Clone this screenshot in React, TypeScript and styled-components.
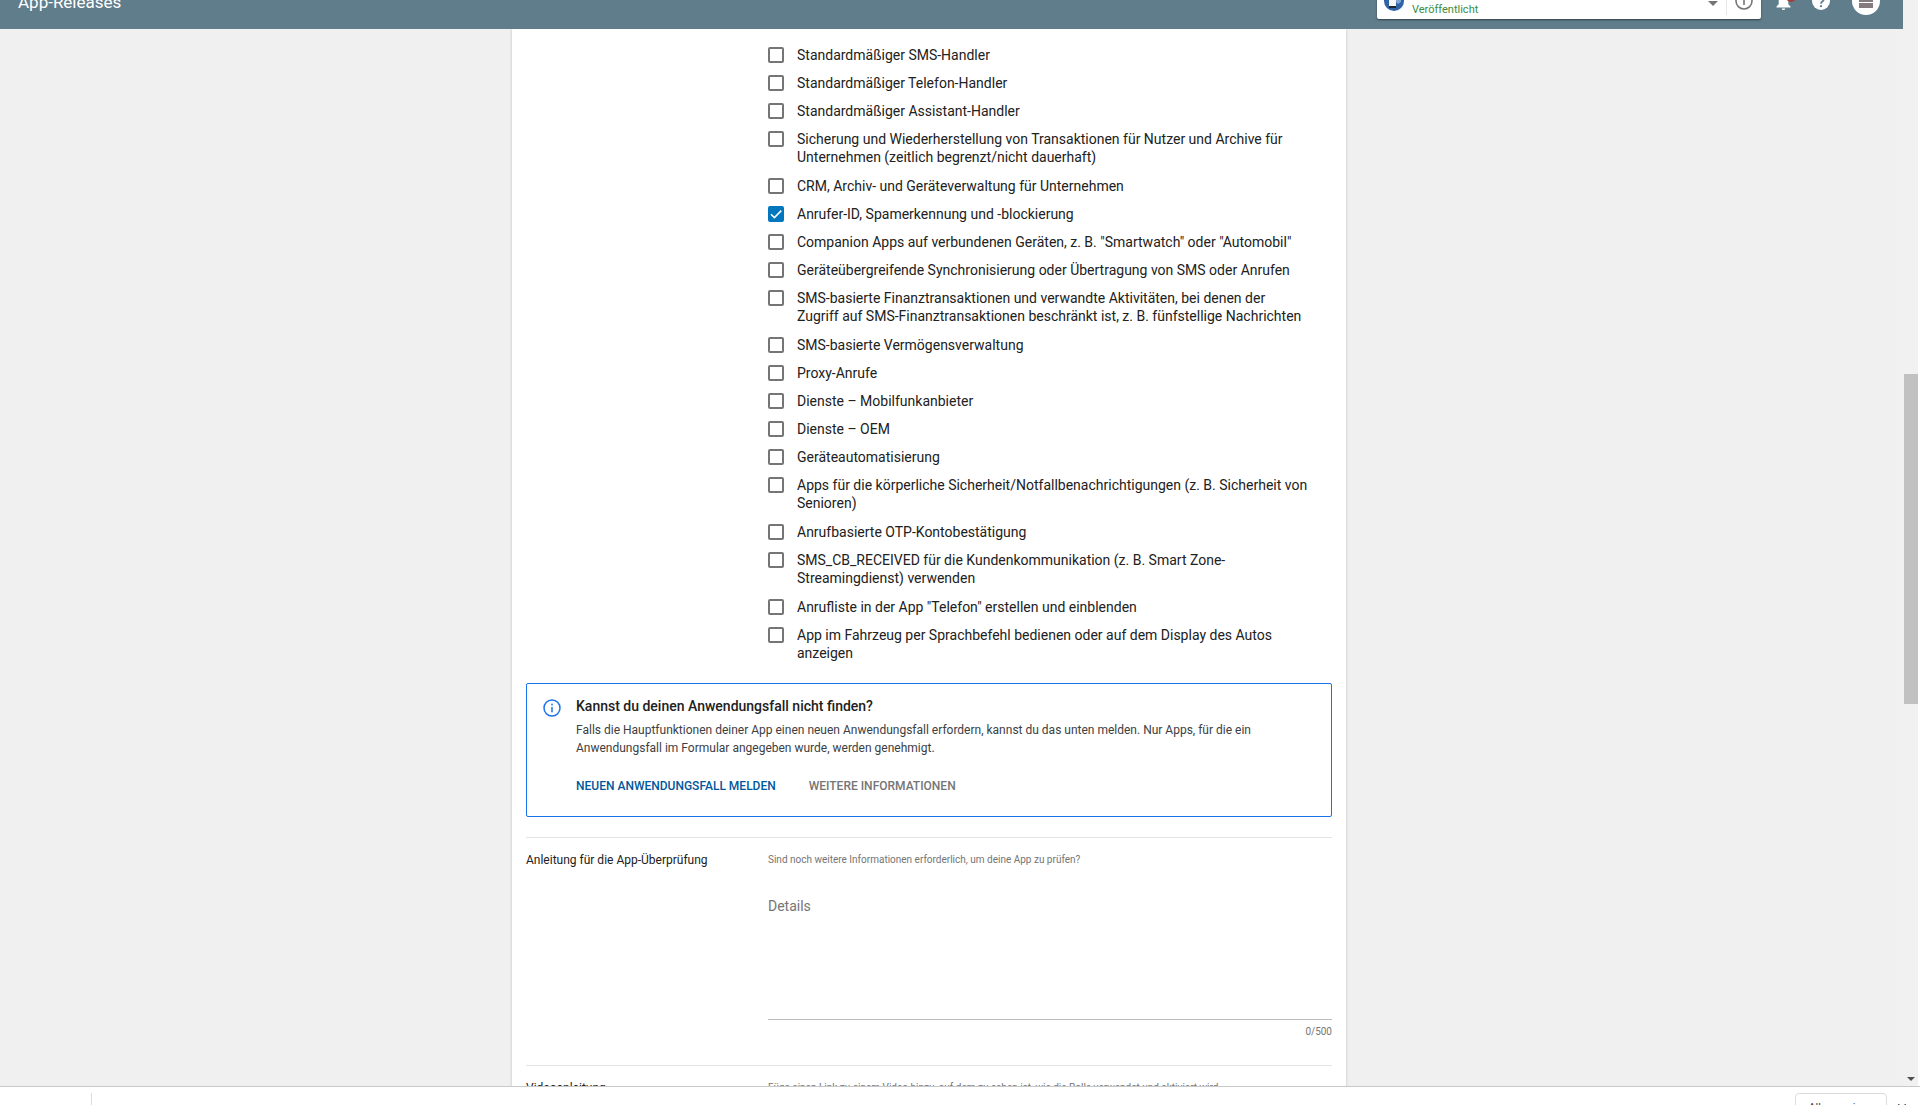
import React, { useState } from "react";
import styled, { createGlobalStyle } from "styled-components";

const GlobalStyle = createGlobalStyle`
  * { box-sizing: border-box; }
  html, body, #root { height: 100%; margin: 0; }
  body {
    overflow: hidden;
    font-family: Roboto, "Liberation Sans", sans-serif;
    font-size: 12px;
    line-height: 18px;
    color: #212121;
    background: #fff;
  }
  button, input, textarea { font: inherit; }
  button { cursor: pointer; }
`;

const Screen = styled.div`
  height: 100%;
  display: flex;
  flex-direction: column;
  overflow: hidden;
`;

const Viewport = styled.div`
  flex: 1;
  min-height: 0;
  display: flex;
  background: #f0f0f0;
`;

const Page = styled.div`
  flex: 1;
  min-width: 0;
  display: flex;
  flex-direction: column;
  overflow: hidden;
`;

/* The header is partly scrolled out of the viewport. */
const Header = styled.header`
  flex: none;
  height: 56px;
  margin-top: -27px;
  display: flex;
  align-items: center;
  padding: 0 23px 0 18px;
  background: #607d8b;
`;

const Title = styled.h1`
  flex: 1;
  margin: 0;
  padding-top: 2px;
  font-size: 17px;
  line-height: 22px;
  font-weight: 400;
  color: #fff;
`;

const AppPicker = styled.div`
  flex: none;
  width: 384px;
  height: 36px;
  display: flex;
  align-items: center;
  background: #fff;
  border-radius: 2px;
  box-shadow: 0 1px 2px rgba(0, 0, 0, 0.5);
`;

const PickerButton = styled.button`
  flex: 1;
  display: flex;
  align-items: center;
  gap: 8px;
  padding: 0 8px 0 7px;
  border: 0;
  background: none;
  text-align: left;
`;

const PickerStatus = styled.span`
  flex: 1;
  padding-top: 18px;
  font-size: 11px;
  line-height: 16px;
  color: #388e3c;
`;

const Caret = styled.span`
  margin-top: 4px;
  border: 5px solid transparent;
  border-top-color: #757575;
  border-bottom: 0;
`;

const InfoSlot = styled.div`
  width: 35px;
  height: 28px;
  display: flex;
  align-items: center;
  justify-content: center;
  border-left: 1px solid #e6e6e6;
`;

const IconButton = styled.button`
  display: flex;
  padding: 0;
  border: 0;
  background: none;
`;

const HeaderActions = styled.div`
  display: flex;
  align-items: center;
  gap: 16px;
  padding-left: 11px;
`;

const Avatar = styled(IconButton)`
  width: 28px;
  height: 28px;
  margin-left: 6px;
  align-items: center;
  justify-content: center;
  border-radius: 50%;
  background: #fff;
`;

const Canvas = styled.main`
  flex: 1;
  min-height: 0;
  display: flex;
  justify-content: center;
  align-items: flex-start;
  padding-right: 45px;
  overflow: hidden;
`;

const Sheet = styled.div`
  width: min(834px, 100%);
  padding: 17px 14px;
  background: #fff;
  box-shadow: 0 0 3px rgba(0, 0, 0, 0.2);
`;

const Options = styled.fieldset`
  display: flex;
  flex-direction: column;
  gap: 10px;
  min-width: 0;
  margin: 0 24px 0 242px;
  padding: 0;
  border: 0;
`;

const Option = styled.label<{ $long?: boolean }>`
  display: grid;
  grid-template-columns: 16px 1fr;
  gap: 13px;
  padding-bottom: ${(p) => (p.$long ? 1 : 0)}px;
  font-size: 14px;
`;

const CheckSlot = styled.span`
  display: grid;
  height: 18px;
  align-items: center;
  > * { grid-area: 1 / 1; }
`;

const Checkbox = styled.input`
  appearance: none;
  width: 16px;
  height: 16px;
  margin: 0;
  border: 2px solid #757575;
  border-radius: 2px;
  background: #fff;
  &:checked {
    border-color: #0277bd;
    background: #0277bd;
  }
  & + svg { visibility: hidden; pointer-events: none; }
  &:checked + svg { visibility: visible; }
`;

const Callout = styled.aside`
  display: flex;
  gap: 15px;
  margin: 20px 0;
  padding: 12px 16px 21px;
  border: 1px solid #1a73e8;
  border-radius: 2px;
`;

const CalloutIcon = styled.svg`
  flex: none;
  width: 18px;
  height: 18px;
  margin-top: 3px;
`;

const CalloutTitle = styled.h2`
  margin: 0 0 5px;
  font-size: 14px;
  line-height: 20px;
  font-weight: 500;
`;

const CalloutText = styled.p`
  margin: 0 0 20px;
  color: #3c4043;
`;

const CalloutActions = styled.div`
  display: flex;
  gap: 33px;
`;

const TextButton = styled.button<{ $primary?: boolean }>`
  padding: 0;
  border: 0;
  background: none;
  font-weight: 500;
  text-transform: uppercase;
  color: ${(p) => (p.$primary ? "#01579b" : "#757575")};
`;

const Section = styled.section`
  display: grid;
  grid-template-columns: 242px 1fr;
  padding: 13px 0 25px;
  border-top: 1px solid #e4e4e4;
`;

const SectionLabel = styled.label`
  color: #212121;
`;

const Field = styled.div`
  display: flex;
  flex-direction: column;
`;

const Hint = styled.span`
  font-size: 10px;
  color: #757575;
`;

const Details = styled.textarea`
  display: block;
  width: 100%;
  height: 123px;
  margin: 28px 0 4px;
  padding: 0;
  border: 0;
  border-bottom: 1px solid #bdbdbd;
  outline: 0;
  resize: none;
  font-size: 14px;
  background: none;
  &::placeholder { color: #757575; opacity: 1; }
`;

const Counter = styled.span`
  align-self: flex-end;
  font-size: 10px;
  line-height: 16px;
  color: #757575;
`;

const ScrollTrack = styled.div`
  flex: none;
  width: 17px;
  display: grid;
  grid-template-rows: 374fr 330fr 368fr 14px;
  justify-items: center;
  padding-left: 1px;
  background: #f1f1f1;
  border-right: 2px solid #fff;
`;

const ScrollThumb = styled.div`
  grid-row: 2;
  width: 100%;
  background: #c1c1c1;
`;

const ScrollArrow = styled.span`
  grid-row: 4;
  align-self: center;
  border: 4px solid transparent;
  border-top-color: #505050;
  border-bottom: 0;
`;

const Shelf = styled.footer`
  flex: none;
  height: 19px;
  display: flex;
  align-items: flex-start;
  justify-content: space-between;
  padding: 6px 14px 0 91px;
  border-top: 1px solid #c8c8c8;
  background: #fff;
  overflow: hidden;
`;

const ShelfDivider = styled.span`
  height: 28px;
  border-left: 1px solid #dadce0;
`;

const ShelfActions = styled.div`
  display: flex;
  align-items: center;
  gap: 11px;
`;

const ShelfButton = styled.button`
  width: 92px;
  height: 30px;
  padding: 0;
  border: 1px solid #dadce0;
  border-radius: 4px;
  background: #fff;
  font-size: 11px;
  color: #3c4043;
`;

const options: { text: string; long?: boolean; checked?: boolean }[] = [
  { text: "Standardmäßiger SMS-Handler" },
  { text: "Standardmäßiger Telefon-Handler" },
  { text: "Standardmäßiger Assistant-Handler" },
  { text: "Sicherung und Wiederherstellung von Transaktionen für Nutzer und Archive für Unternehmen (zeitlich begrenzt/nicht dauerhaft)", long: true },
  { text: "CRM, Archiv- und Geräteverwaltung für Unternehmen" },
  { text: "Anrufer-ID, Spamerkennung und -blockierung", checked: true },
  { text: 'Companion Apps auf verbundenen Geräten, z. B. "Smartwatch" oder "Automobil"' },
  { text: "Geräteübergreifende Synchronisierung oder Übertragung von SMS oder Anrufen" },
  { text: "SMS-basierte Finanztransaktionen und verwandte Aktivitäten, bei denen der Zugriff auf SMS-Finanztransaktionen beschränkt ist, z. B. fünfstellige Nachrichten", long: true },
  { text: "SMS-basierte Vermögensverwaltung" },
  { text: "Proxy-Anrufe" },
  { text: "Dienste – Mobilfunkanbieter" },
  { text: "Dienste – OEM" },
  { text: "Geräteautomatisierung" },
  { text: "Apps für die körperliche Sicherheit/Notfallbenachrichtigungen (z. B. Sicherheit von Senioren)", long: true },
  { text: "Anrufbasierte OTP-Kontobestätigung" },
  { text: "SMS_CB_RECEIVED für die Kundenkommunikation (z. B. Smart Zone-Streamingdienst) verwenden", long: true },
  { text: 'Anrufliste in der App "Telefon" erstellen und einblenden' },
  { text: "App im Fahrzeug per Sprachbefehl bedienen oder auf dem Display des Autos anzeigen", long: true },
];

const App = () => {
  const [details, setDetails] = useState("");
  return (
    <Screen>
      <GlobalStyle />
      <Viewport>
        <Page>
          <Header>
            <Title>App-Releases</Title>
            <AppPicker>
              <PickerButton aria-label="App auswählen">
                <svg width="20" height="20" viewBox="0 0 20 20">
                  <circle cx="10" cy="10" r="10" fill="#2f62a6" />
                  <path d="M12 7h5v4l-3 2-2-2z" fill="#7fa6d8" />
                  <rect x="5" y="3" width="7" height="14" rx="1" fill="#f5f5f5" />
                  <rect x="5" y="15" width="7" height="2" fill="#20242b" />
                </svg>
                <PickerStatus>Veröffentlicht</PickerStatus>
                <Caret />
              </PickerButton>
              <InfoSlot>
                <IconButton aria-label="App-Informationen">
                  <svg width="18" height="18" viewBox="0 0 18 18">
                    <circle cx="9" cy="9" r="8" fill="none" stroke="#757575" strokeWidth="1.6" />
                    <path d="M9 8v5M9 5v1.6" stroke="#757575" strokeWidth="1.6" />
                  </svg>
                </IconButton>
              </InfoSlot>
            </AppPicker>
            <HeaderActions>
              <IconButton aria-label="Benachrichtigungen">
                <svg width="24" height="20" viewBox="0 0 24 20">
                  <path d="M11.5 1.2a1.4 1.4 0 0 0-1.4 1.4v.5C7.8 3.700 6.700 5.800 6.700 8.200v5L4.500 15.400v1.200h14v-1.200l-2.200-2.200v-5c0-2.400-1.100-4.500-3.400-5.100v-.5a1.400 1.400 0 0 0-1.400-1.400zM9.800 17.400a1.700 1.700 0 0 0 3.400 0z" fill="#fff" />
                  <circle cx="19" cy="6" r="5" fill="#a93a36" />
                </svg>
              </IconButton>
              <IconButton aria-label="Hilfe">
                <svg width="18" height="18" viewBox="0 0 18 18">
                  <circle cx="9" cy="9" r="9" fill="#fff" />
                  <path d="M6.200 7a2.800 2.800 0 1 1 4.700 2c-1 .9-1.900 1.300-1.900 2.700" fill="none" stroke="#607d8b" strokeWidth="1.800" />
                  <circle cx="9" cy="14.200" r="1.100" fill="#607d8b" />
                </svg>
              </IconButton>
              <Avatar aria-label="Konto">
                <svg width="14" height="14" viewBox="0 0 14 14">
                  <path d="M0 0h14v2H0zM0 3h14v5H0zM0 9h14v5H0z" fill="#857b7e" />
                </svg>
              </Avatar>
            </HeaderActions>
          </Header>
          <Canvas>
            <Sheet>
              <Options aria-label="Anwendungsfälle">
                {options.map((o) => (
                  <Option key={o.text} $long={o.long}>
                    <CheckSlot>
                      <Checkbox type="checkbox" defaultChecked={o.checked} />
                      <svg width="16" height="16" viewBox="0 0 16 16">
                        <path d="M3 8.200l3.400 3.400L13.300 4.600" fill="none" stroke="#fff" strokeWidth="1.500" />
                      </svg>
                    </CheckSlot>
                    <span>{o.text}</span>
                  </Option>
                ))}
              </Options>
              <Callout>
                <CalloutIcon viewBox="0 0 18 18">
                  <circle cx="9" cy="9" r="8" fill="none" stroke="#1a73e8" strokeWidth="1.500" />
                  <path d="M9 8v5.200M9 4.800v1.600" stroke="#1a73e8" strokeWidth="1.500" />
                </CalloutIcon>
                <div>
                  <CalloutTitle>Kannst du deinen Anwendungsfall nicht finden?</CalloutTitle>
                  <CalloutText>
                    Falls die Hauptfunktionen deiner App einen neuen Anwendungsfall erfordern, kannst du das unten melden. Nur Apps, für die ein
                    Anwendungsfall im Formular angegeben wurde, werden genehmigt.
                  </CalloutText>
                  <CalloutActions>
                    <TextButton $primary>Neuen Anwendungsfall melden</TextButton>
                    <TextButton>Weitere Informationen</TextButton>
                  </CalloutActions>
                </div>
              </Callout>
              <Section>
                <SectionLabel htmlFor="details">Anleitung für die App-Überprüfung</SectionLabel>
                <Field>
                  <Hint>Sind noch weitere Informationen erforderlich, um deine App zu prüfen?</Hint>
                  <Details
                    id="details"
                    placeholder="Details"
                    maxLength={500}
                    value={details}
                    onChange={(e) => setDetails(e.target.value)}
                  />
                  <Counter>{details.length}/500</Counter>
                </Field>
              </Section>
              <Section>
                <span>Videoanleitung</span>
                <Hint>Füge einen Link zu einem Video hinzu, auf dem zu sehen ist, wie die Rolle verwendet und aktiviert wird</Hint>
              </Section>
            </Sheet>
          </Canvas>
        </Page>
        <ScrollTrack>
          <ScrollThumb />
          <ScrollArrow />
        </ScrollTrack>
      </Viewport>
      <Shelf>
        <ShelfDivider />
        <ShelfActions>
          <ShelfButton>Alle anzeigen</ShelfButton>
          <IconButton aria-label="Schließen">
            <svg width="8" height="8" viewBox="0 0 8 8">
              <path d="M0 0l8 8M8 0L0 8" stroke="#5f6368" strokeWidth="1.500" />
            </svg>
          </IconButton>
        </ShelfActions>
      </Shelf>
    </Screen>
  );
};

export default App;
